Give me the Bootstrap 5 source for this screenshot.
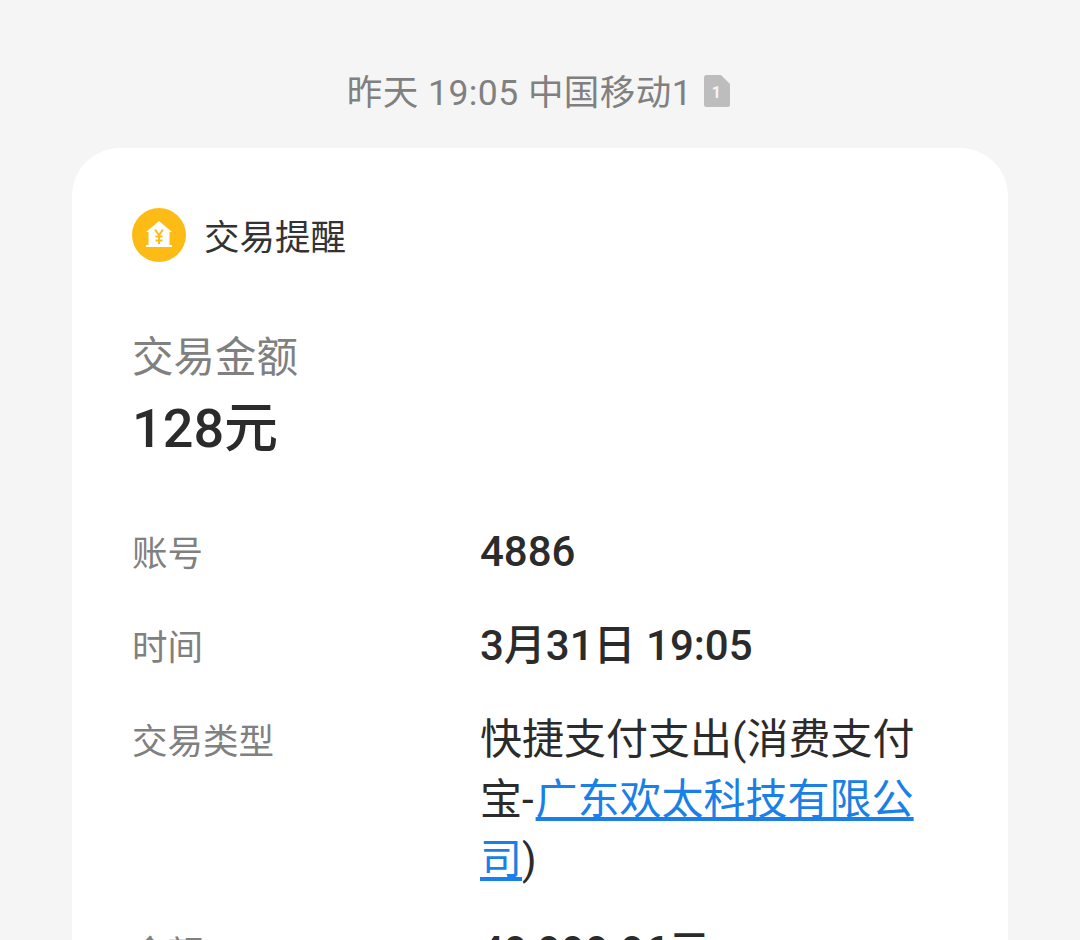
<!DOCTYPE html>
<html lang="zh">
<head>
<meta charset="utf-8">
<title>交易提醒</title>
<link href="https://cdn.jsdelivr.net/npm/bootstrap@5.3.0/dist/css/bootstrap.min.css" rel="stylesheet">
<style>
html,body{height:940px;overflow:hidden}
body{background:#f5f5f5;font-family:Roboto,"Noto Sans CJK SC",sans-serif;color:#2b2b2b}
.stamp{height:148px;padding:66px 3px 0 0;font-size:35.5px;line-height:54px;color:#808080;letter-spacing:.45px}
.sim-ic{width:26px;height:32px;margin:9px 0 0 12px}
.msg-card{margin:0 72px;background:#fff;border-radius:48px 48px 0 0;padding:60px 92px 0 60px;height:792px}
.msg-head{font-size:35.5px;gap:18px;color:#333;height:54px}
.msg-head span{line-height:48px;margin-top:6px}
.msg-ic{width:54px;height:54px;flex:none}
.amt-label{font-size:41.5px;line-height:58px;color:#808080;margin-top:67px}
.amt-val{font-size:54px;line-height:66px;font-weight:500;margin-top:9px;color:#2b2b2b}
.info-list{margin-top:60px}
.info-row{margin-bottom:34px;display:flex}
.info-row.tight{margin-bottom:32px}
.info-key{width:348px;flex:none;font-size:35.5px;line-height:54px;padding-top:5px;color:#808080}
.info-val{font-size:42px;line-height:60px;font-weight:500;color:#2b2b2b}
.info-val .cjk{font-weight:400}
.info-val a{color:#1a7fe6;font-weight:400;text-underline-offset:3px;margin-left:2px}
</style>
</head>
<body>
<div class="stamp d-flex justify-content-center align-items-start">
  <span>昨天 19:05 中国移动1</span>
  <svg class="sim-ic" viewBox="0 0 26 32"><path d="M2.500 0H17l9 9v20.500a2.500 2.500 0 0 1-2.500 2.500h-21A2.500 2.500 0 0 1 0 29.500V2.500A2.500 2.500 0 0 1 2.500 0z" fill="#bdbdbd"/><text x="12.500" y="23" font-size="16" font-weight="700" text-anchor="middle" fill="#f5f5f5" font-family="Roboto,sans-serif">1</text></svg>
</div>
<div class="msg-card">
  <div class="msg-head d-flex align-items-center">
    <svg class="msg-ic" viewBox="0 0 54 54"><circle cx="27" cy="27" r="27" fill="#fdbb16"/><path d="M27 13 40 24h-2.500v13H40v2H14v-2h2.500V24H14z" fill="#fff"/><path d="M23 21.500 27 27l4-5.500M27 27v9M23.500 28.500h7M23.500 32.500h7" fill="none" stroke="#fdbb16" stroke-width="2"/></svg>
    <span>交易提醒</span>
  </div>
  <div class="amt-label">交易金额</div>
  <div class="amt-val">128元</div>
  <div class="info-list">
    <div class="info-row"><div class="info-key">账号</div><div class="info-val">4886</div></div>
    <div class="info-row"><div class="info-key">时间</div><div class="info-val">3月31日 19:05</div></div>
    <div class="info-row tight"><div class="info-key">交易类型</div><div class="info-val"><span class="cjk">快捷支付支出(消费支付宝-<a href="#">广东欢太科技有限公司</a>)</span></div></div>
    <div class="info-row"><div class="info-key">余额</div><div class="info-val">49,999.96元</div></div>
  </div>
</div>
</body>
</html>
